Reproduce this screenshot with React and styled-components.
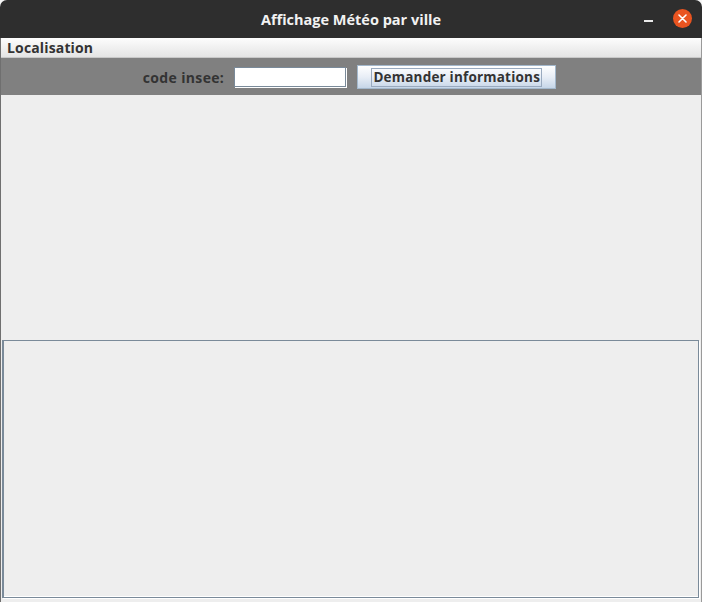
import React from 'react';
import styled, { createGlobalStyle } from 'styled-components';

const GlobalStyle = createGlobalStyle`
html, body {
  margin: 0;
  padding: 0;
  background: #f6f6f6;
}
`;

const Window = styled.div`
width: 702px;
height: 602px;
display: flex;
flex-direction: column;
background: #eeeeee;
border-radius: 7px 7px 0 0;
overflow: hidden;
font-family: "Open Sans", Lato, sans-serif;
`;

const TitleBar = styled.div`
height: 38px;
flex-shrink: 0;
background: #2e2e2e;
position: relative;
display: flex;
align-items: center;
justify-content: center;
`;

const Title = styled.div`
color: #f2f2f2;
font-size: 14.5px;
font-weight: 700;
`;

const WindowButtons = styled.div`
position: absolute;
right: 10px;
top: 9px;
display: flex;
align-items: center;
gap: 20px;
`;

const Minimize = styled.div`
width: 9px;
height: 2px;
background: #eaeaea;
margin-top: 4px;
`;

const CloseButton = styled.div`
width: 19px;
height: 19px;
border-radius: 50%;
background: #e95420;
display: flex;
align-items: center;
justify-content: center;
`;

const Body = styled.div`
flex: 1;
display: flex;
flex-direction: column;
border-left: 1px solid #6f6f6f;
border-right: 1px solid #9a9a9a;
`;

const MenuBar = styled.div`
height: 19px;
flex-shrink: 0;
background: linear-gradient(#fdfdfd, #e4e4e4);
border-bottom: 1px solid #c8c8c8;
display: flex;
align-items: center;
padding-left: 6px;
`;

const MenuItem = styled.span`
font-size: 14px;
font-weight: 700;
color: #333333;
letter-spacing: 0.15px;
`;

const Toolbar = styled.div`
height: 37px;
box-sizing: border-box;
padding: 1px 3px 0 0;
flex-shrink: 0;
background: #808080;
display: flex;
align-items: center;
justify-content: center;
`;

const Label = styled.span`
font-size: 14px;
font-weight: 700;
color: #333333;
letter-spacing: 0.35px;
margin-right: 10px;
`;

const Field = styled.div`
width: 110px;
height: 18px;
background: #ffffff;
border: 1px solid #7a8a99;
box-shadow: 1px 1px 0 #ffffff;
margin-right: 11px;
`;

const Button = styled.div`
width: 197px;
height: 22px;
border: 1px solid #a3b8cc;
background: linear-gradient(#ffffff 0%, #e8eef6 50%, #c6d6e8 100%);
display: flex;
align-items: center;
justify-content: center;
`;

const ButtonText = styled.span`
font-size: 13.5px;
font-weight: 700;
color: #333333;
letter-spacing: 0.2px;
border: 1px solid #99aabf;
padding: 0 1px;
line-height: 17px;
`;

const Upper = styled.div`
height: 245px;
flex-shrink: 0;
`;

const Lower = styled.div`
flex: 1;
margin: 0 2px 4px 1px;
border: 1px solid #7a8a99;
border-left-width: 2px;
box-shadow: 1px 1px 0 #ffffff, inset 0 -1px 0 #ffffff;
`;

export default function App() {
  return (
    <>
      <GlobalStyle />
      <Window>
        <TitleBar>
          <Title>Affichage Météo par ville</Title>
          <WindowButtons>
            <Minimize />
            <CloseButton>
              <svg width="9" height="9" viewBox="0 0 9 9">
                <path d="M1 1 L8 8 M8 1 L1 8" stroke="#ffffff" strokeWidth="1.6" strokeLinecap="round" />
              </svg>
            </CloseButton>
          </WindowButtons>
        </TitleBar>
        <Body>
          <MenuBar>
            <MenuItem>Localisation</MenuItem>
          </MenuBar>
          <Toolbar>
            <Label>code insee:</Label>
            <Field />
            <Button>
              <ButtonText>Demander informations</ButtonText>
            </Button>
          </Toolbar>
          <Upper />
          <Lower />
        </Body>
      </Window>
    </>
  );
}
